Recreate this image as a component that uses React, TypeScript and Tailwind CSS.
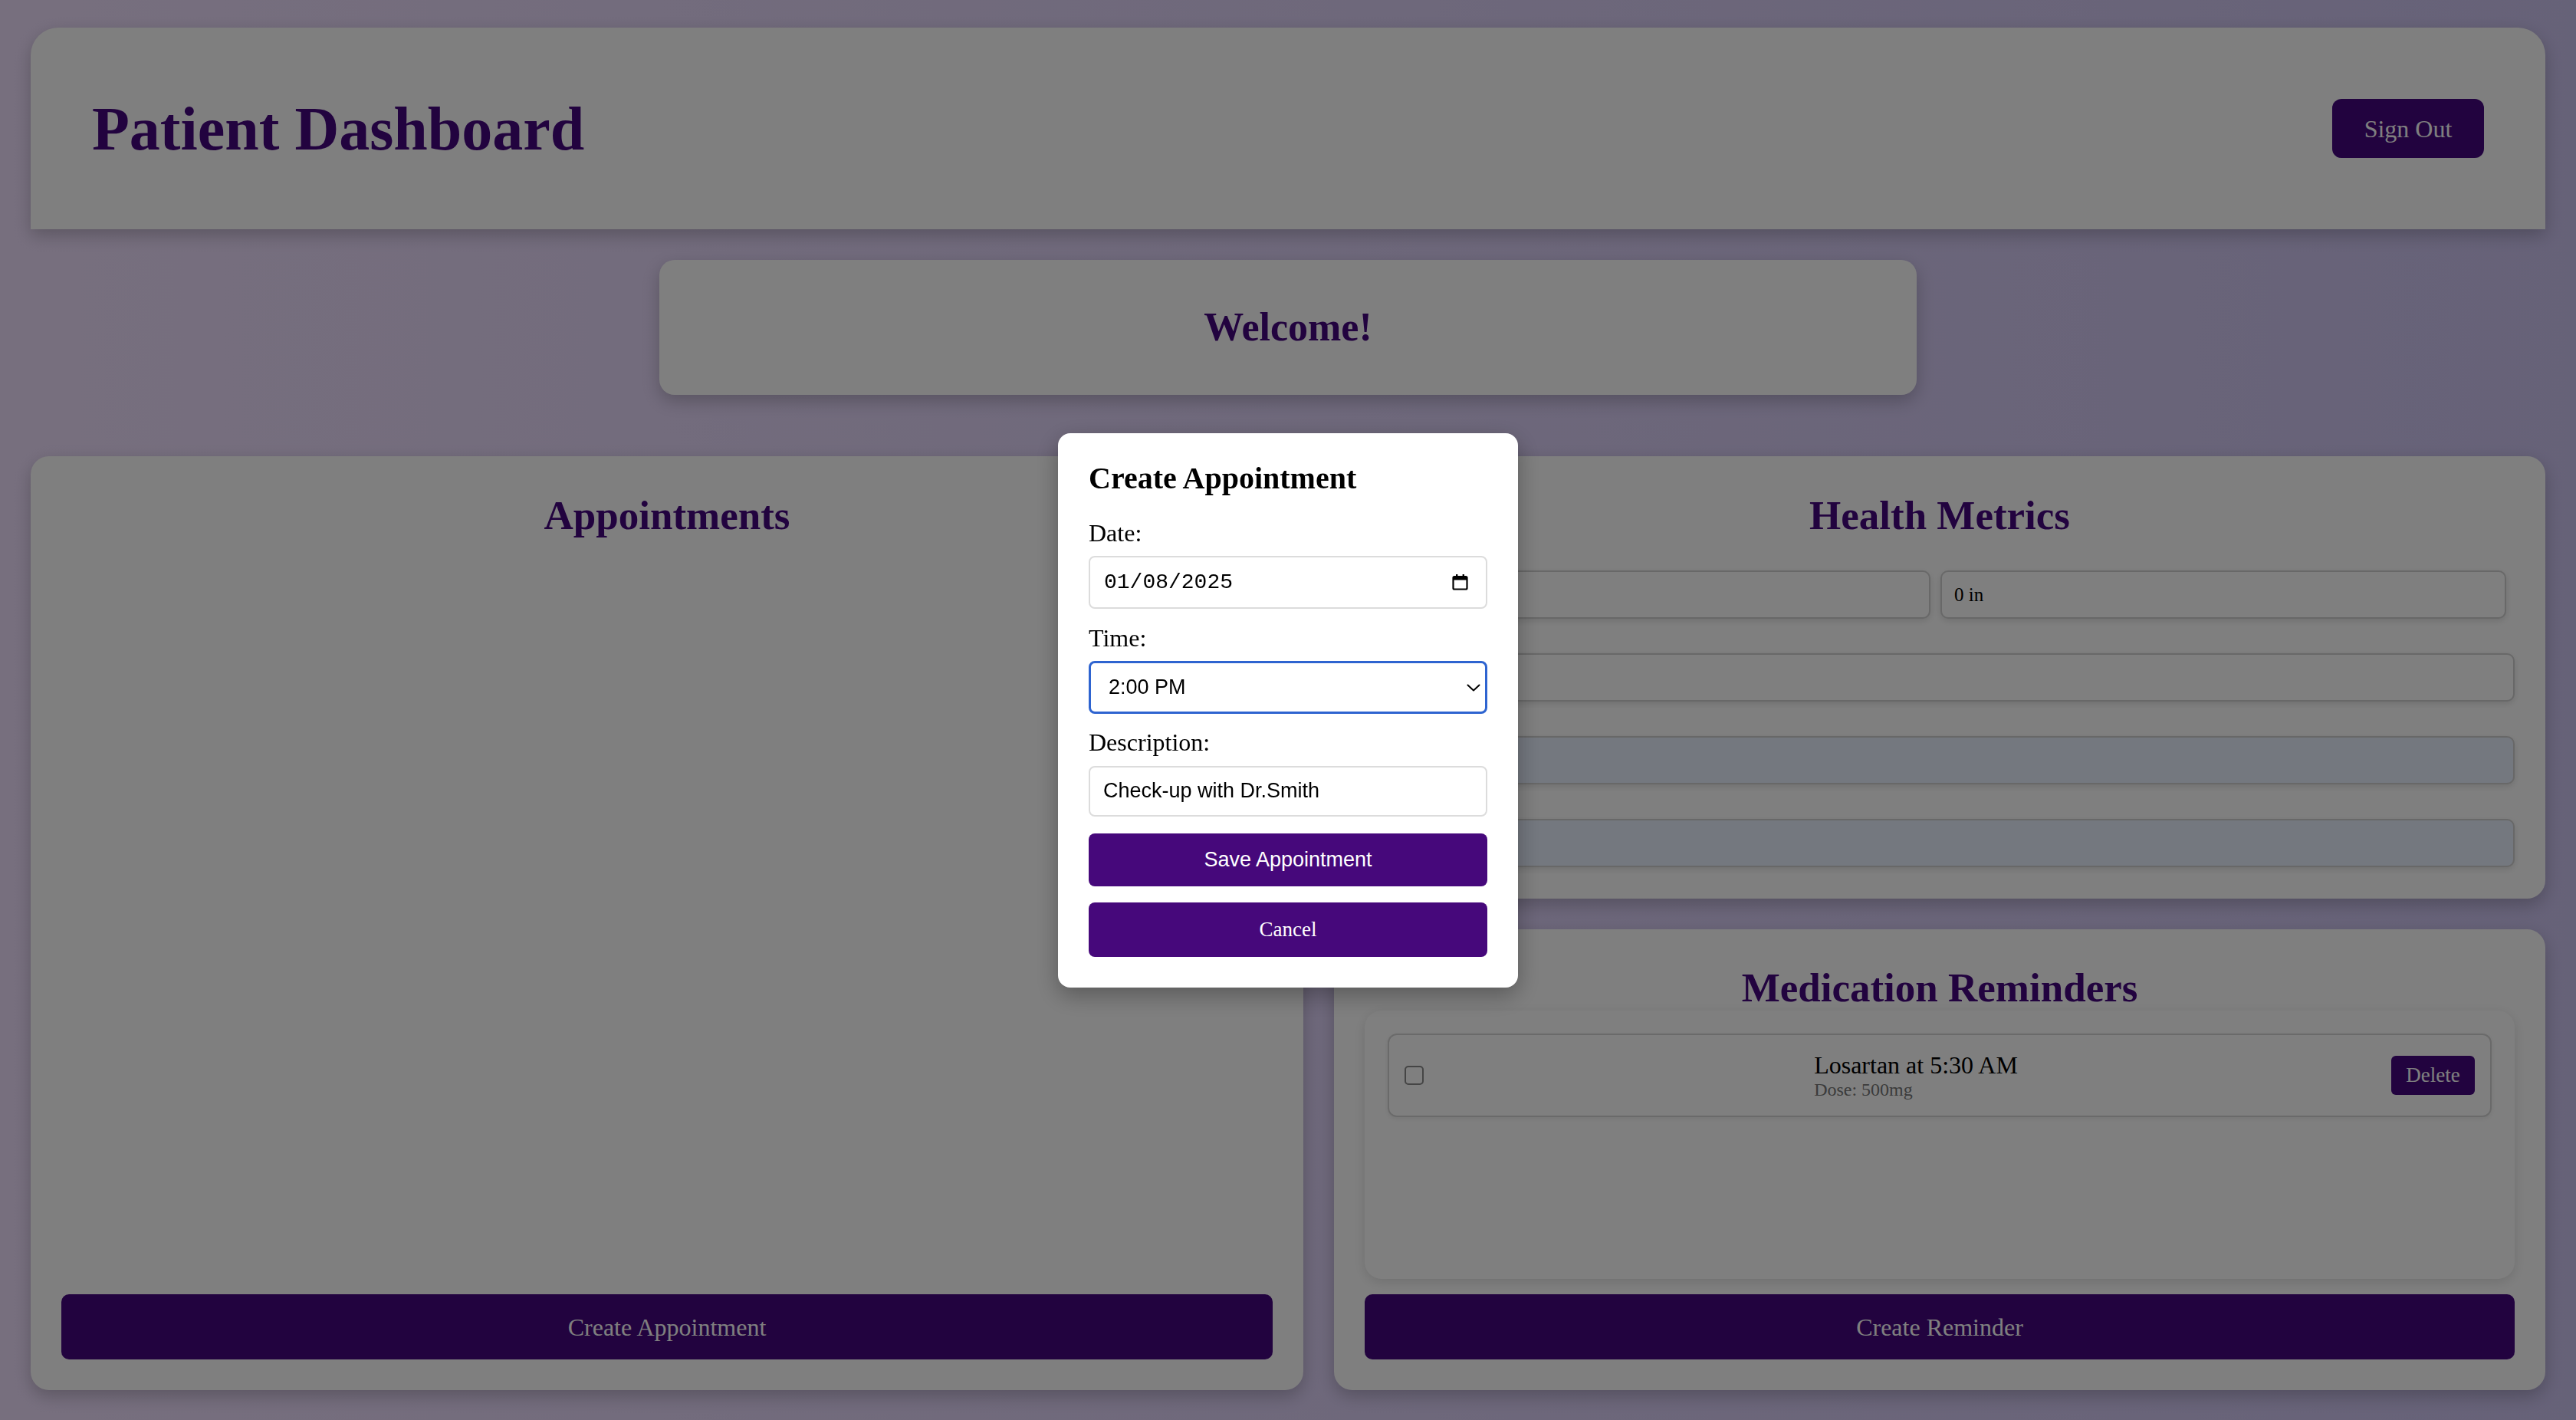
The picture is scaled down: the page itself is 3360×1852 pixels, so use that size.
import React from "react";

const serif = "font-['Liberation_Serif',serif]";
const sans = "font-['Liberation_Sans',Arial,sans-serif]";

const HealthInput = ({ value, autofill, className }: { value: string; autofill?: boolean; className?: string }) => (
  <input
    readOnly
    value={value}
    className={`h-[63px] rounded-[10px] border-2 border-[#d0d0d0] px-[16px] text-[25px] text-black shadow-[0_3px_8px_rgba(0,0,0,0.12)] outline-none ${serif} ${
      autofill ? "bg-[#e8f0fe]" : "bg-white"
    } ${className || ""}`}
  />
);

const CalendarIcon = () => (
  <svg width="21" height="22" viewBox="0 0 21 22" fill="none">
    <rect x="1.5" y="4" width="18" height="16.5" rx="1.5" stroke="#000" strokeWidth="2.2" />
    <rect x="1.5" y="4" width="18" height="4.5" fill="#000" />
    <rect x="5" y="1" width="2.4" height="4" fill="#000" />
    <rect x="13.6" y="1" width="2.4" height="4" fill="#000" />
  </svg>
);

const Chevron = () => (
  <svg width="18" height="10" viewBox="0 0 18 10" fill="none">
    <path d="M1.5 1.5 L9 8.5 L16.5 1.5" stroke="#000" strokeWidth="2" strokeLinecap="round" strokeLinejoin="round" />
  </svg>
);

export default function App() {
  return (
    <div className={`min-h-screen bg-gradient-to-r from-[#efdffd] to-[#cdc4f1] pt-[36px] px-10 pb-10 ${serif}`}>
      {/* header */}
      <header className="flex h-[263px] items-center justify-between rounded-t-[36px] bg-white px-20 shadow-[0_8px_22px_rgba(0,0,0,0.22)]">
        <h1 className="text-[80px] font-bold leading-none text-[#45077e]">Patient Dashboard</h1>
        <button className="h-[77px] w-[198px] rounded-[12px] bg-[#45077e] text-[32px] text-white">Sign Out</button>
      </header>

      {/* welcome */}
      <div className="mx-auto mt-10 mb-20 flex h-[176px] w-[1640px] items-center justify-center rounded-[20px] bg-white shadow-[0_8px_22px_rgba(0,0,0,0.22)]">
        <h2 className="text-[52px] font-bold leading-[60px] text-[#45077e]">Welcome!</h2>
      </div>

      <div className="flex gap-10">
        {/* appointments */}
        <section className="flex w-[1660px] flex-col rounded-[24px] bg-white px-10 pt-[47px] pb-10 shadow-[0_8px_22px_rgba(0,0,0,0.22)]">
          <h2 className="text-center text-[53px] font-bold leading-[60px] text-[#45077e]">Appointments</h2>
          <div className="flex-1" />
          <button className="h-[85px] w-full rounded-[10px] bg-[#45077e] text-[32px] text-white">Create Appointment</button>
        </section>

        <div className="flex w-[1580px] flex-col gap-10">
          {/* health metrics */}
          <section className="rounded-[24px] bg-white px-10 pt-[47px] pb-[41px] shadow-[0_8px_22px_rgba(0,0,0,0.22)]">
            <h2 className="text-center text-[53px] font-bold leading-[60px] text-[#45077e]">Health Metrics</h2>
            <div className="mt-[42px] flex flex-col gap-[45px]">
              <div className="flex gap-[13px] pr-[11px]">
                <HealthInput value="0 ft" className="flex-1" />
                <HealthInput value="0 in" className="flex-1" />
              </div>
              <HealthInput value="0 lbs" className="w-full" />
              <HealthInput value="" autofill className="w-full" />
              <HealthInput value="" autofill className="w-full" />
            </div>
          </section>

          {/* medication reminders */}
          <section className="flex flex-col rounded-[24px] bg-white px-10 pt-[46px] pb-10 shadow-[0_8px_22px_rgba(0,0,0,0.22)]">
            <h2 className="text-center text-[53px] font-bold leading-[60px] text-[#45077e]">Medication Reminders</h2>
            <div className="h-[350px] rounded-[22px] bg-white p-[30px] shadow-[0_4px_16px_rgba(0,0,0,0.13)]">
              <div className="flex h-[109px] items-center justify-between rounded-[12px] border-2 border-[#d4d4d4] px-[20px] shadow-[0_2px_6px_rgba(0,0,0,0.08)]">
                <input
                  type="checkbox"
                  className="h-[25px] w-[25px] appearance-none rounded-[5px] border-2 border-[#8a8a8a] bg-white"
                />
                <div className="ml-[22px] flex flex-col">
                  <span className="text-[32px] leading-[36px] text-black">Losartan at 5:30 AM</span>
                  <span className="text-[24px] leading-[28px] text-[#777]">Dose: 500mg</span>
                </div>
                <button className="h-[51px] w-[109px] rounded-[6px] bg-[#45077e] text-[27px] text-white">Delete</button>
              </div>
            </div>
            <button className="mt-5 h-[85px] w-full rounded-[10px] bg-[#45077e] text-[32px] text-white">Create Reminder</button>
          </section>
        </div>
      </div>

      {/* modal overlay */}
      <div className="fixed inset-0 flex items-center justify-center bg-black/50">
        <div className="w-[600px] rounded-[16px] bg-white px-10 pt-[38px] pb-10 shadow-[0_10px_30px_rgba(0,0,0,0.3)]">
          <h2 className="mb-[32px] text-[40px] font-bold leading-[42px] text-black">Create Appointment</h2>

          <label className="block text-[32px] leading-[37px] text-black">Date:</label>
          <div className="relative mt-[11px]">
            <input
              readOnly
              value="01/08/2025"
              className="h-[69px] w-full rounded-[8px] border-2 border-[#dcdcdc] bg-white pl-[18px] text-[28px] text-black outline-none font-['Liberation_Mono',monospace]"
            />
            <div className="pointer-events-none absolute right-[25px] top-[23px]">
              <CalendarIcon />
            </div>
          </div>

          <label className="mt-[20px] block text-[32px] leading-[37px] text-black">Time:</label>
          <div className="relative mt-[11px]">
            <select
              defaultValue="14:00"
              className={`h-[69px] w-full appearance-none rounded-[8px] border-[3px] border-[#2e64d0] bg-white pl-[23px] text-[27px] text-black outline-none ${sans}`}
            >
              <option value="14:00">2:00 PM</option>
            </select>
            <div className="pointer-events-none absolute right-[9px] top-[30px]">
              <Chevron />
            </div>
          </div>

          <label className="mt-[19px] block text-[32px] leading-[37px] text-black">Description:</label>
          <input
            readOnly
            value="Check-up with Dr.Smith"
            className={`mt-[12px] h-[66px] w-full rounded-[8px] border-2 border-[#dcdcdc] bg-white pl-[17px] text-[27px] text-black outline-none ${sans}`}
          />

          <button className={`mt-[22px] h-[69px] w-full rounded-[8px] bg-[#46087b] text-[27px] text-white ${sans}`}>
            Save Appointment
          </button>
          <button className="mt-[21px] h-[71px] w-full rounded-[8px] bg-[#46087b] text-[27px] text-white">Cancel</button>
        </div>
      </div>
    </div>
  );
}
